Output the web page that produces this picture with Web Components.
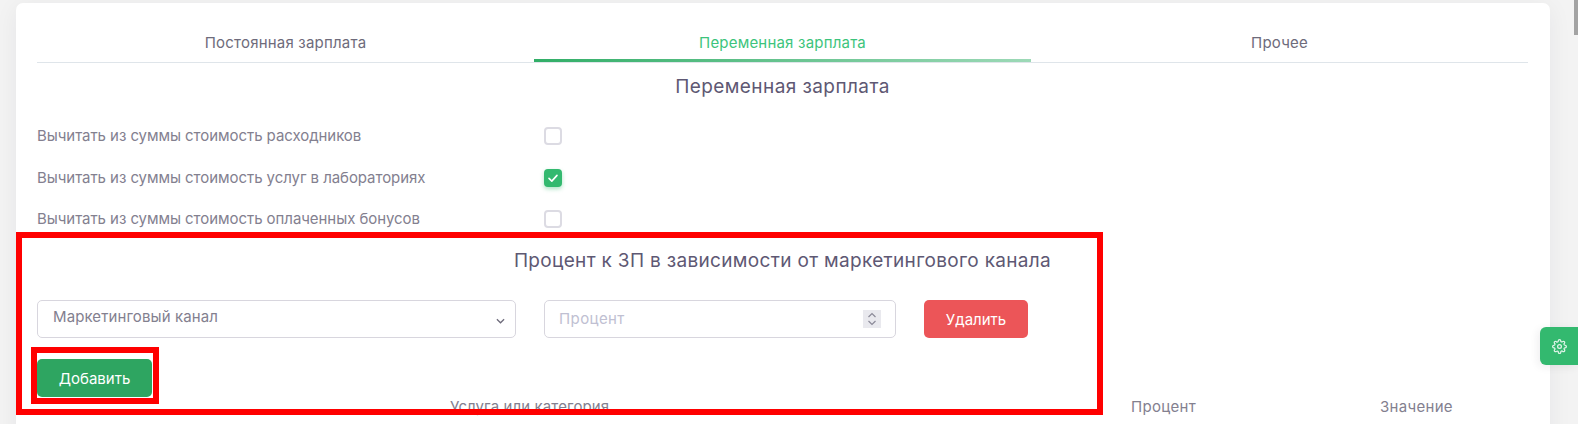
<!DOCTYPE html>
<html lang="ru">
<head>
<meta charset="utf-8">
<title>Переменная зарплата</title>
<style>
    html, body{
        margin: 0;
        height: 424px;
        overflow: hidden;
        background-color: #f3f3f3;
        font-family: "Inter", "Noto Sans", sans-serif;
    }
</style>
</head>
<body>
<salary-card>
    <salary-tabs></salary-tabs>
    <section-title style="margin-top: 12px; letter-spacing: .42px;">Переменная зарплата</section-title>
    <check-row style="margin-top: 28px;">Вычитать из суммы стоимость расходников</check-row>
    <check-row style="margin-top: 24px;" checked>Вычитать из суммы стоимость услуг в лабораториях</check-row>
    <check-row style="margin-top: 23px;">Вычитать из суммы стоимость оплаченных бонусов</check-row>
    <section-title style="margin-top: 21px; letter-spacing: .33px;">Процент к ЗП в зависимости от маркетингового канала</section-title>
    <channel-form style="margin-top: 27px;"></channel-form>
    <action-button style="margin-top: 21px;" kind="add">Добавить</action-button>
    <table-head></table-head>
</salary-card>
<red-frame style="left: 16px; top: 232px; width: 1087px; height: 183px;"></red-frame>
<red-frame style="left: 31px; top: 347px; width: 128px; height: 57px;"></red-frame>
<gear-tab></gear-tab>
<scroll-thumb></scroll-thumb>

<script>
class SalaryCard extends HTMLElement{
    constructor(){
        super();
        this.shadowDom = this.attachShadow({mode: "open"});
    }
    connectedCallback(){
        this.shadowDom.innerHTML = `
            <style>
                :host{
                    display: block;
                    margin: 3px 28px 0 16px;
                    padding: 0 22px 0 21px;
                    height: 600px;
                    background-color: #fff;
                    border-radius: 7px;
                    box-shadow: 0 4px 24px 0 rgba(34, 41, 47, 0.06);
                }
            </style>
            <slot></slot>
        `;
    }
}

class SalaryTabs extends HTMLElement{
    constructor(){
        super();
        this.shadowDom = this.attachShadow({mode: "open"});
    }
    connectedCallback(){
        this.shadowDom.innerHTML = `
            <style>
                :host{
                    display: grid;
                    grid-template-columns: repeat(3, 1fr);
                    height: 60px;
                    box-sizing: border-box;
                    border-bottom: 1px solid #dfe5ea;
                    font-size: 15px;
                    letter-spacing: .2px;
                    color: #6e6b7b;
                }
                .tab{
                    text-align: center;
                    padding-top: 31px;
                    line-height: 18px;
                }
                .active{
                    color: #3cc47c;
                    background: linear-gradient(90deg, #31ae67, #9dd9b7) bottom / 100% 3px no-repeat;
                }
            </style>
            <div class="tab">Постоянная зарплата</div>
            <div class="tab active">Переменная зарплата</div>
            <div class="tab">Прочее</div>
        `;
    }
}

class SectionTitle extends HTMLElement{
    constructor(){
        super();
        this.shadowDom = this.attachShadow({mode: "open"});
    }
    connectedCallback(){
        this.shadowDom.innerHTML = `
            <style>
                :host{
                    display: block;
                    text-align: center;
                    font-size: 19px;
                    line-height: 24px;
                    color: #5e5873;
                }
            </style>
            <slot></slot>
        `;
    }
}

class CheckRow extends HTMLElement{
    constructor(){
        super();
        this.shadowDom = this.attachShadow({mode: "open"});
    }
    connectedCallback(){
        var mark = this.hasAttribute("checked")
            ? `<svg viewBox="0 0 18 18" width="18" height="18"><path d="M5 9.4l2.8 2.7 5.2-5.7" fill="none" stroke="#fff" stroke-width="1.6" stroke-linecap="round" stroke-linejoin="round"/></svg>`
            : "";
        this.shadowDom.innerHTML = `
            <style>
                :host{
                    display: flex;
                    align-items: center;
                    height: 18px;
                    font-size: 15px;
                    letter-spacing: -.06px;
                    color: #83808f;
                }
                .label{
                    width: 507px;
                    position: relative;
                    top: -1px;
                }
                .box{
                    width: 18px;
                    height: 18px;
                    box-sizing: border-box;
                    border: 2px solid #dcdbe3;
                    border-radius: 4px;
                    background-color: #fff;
                }
                :host([checked]) .box{
                    border: none;
                    background-color: #33b96f;
                    box-shadow: 0 2px 4px 0 rgba(51, 185, 111, 0.4);
                }
                svg{
                    display: block;
                }
            </style>
            <div class="label"><slot></slot></div>
            <div class="box">${mark}</div>
        `;
    }
}

class ChannelForm extends HTMLElement{
    constructor(){
        super();
        this.shadowDom = this.attachShadow({mode: "open"});
    }
    connectedCallback(){
        this.shadowDom.innerHTML = `
            <style>
                :host{
                    display: grid;
                    grid-template-columns: 479px 352px 104px;
                    column-gap: 28px;
                    height: 38px;
                    font-size: 15px;
                }
                .field{
                    box-sizing: border-box;
                    border: 1px solid #d8d6de;
                    border-radius: 5px;
                    display: flex;
                    align-items: center;
                    justify-content: space-between;
                    background-color: #fff;
                }
                .select{
                    padding: 0 10px 0 15px;
                    color: #83808f;
                    letter-spacing: .1px;
                }
                .select span{
                    position: relative;
                    top: -3px;
                }
                .select svg{
                    position: relative;
                    top: 2px;
                }
                .input{
                    padding: 0 14px 0 14px;
                    color: #c0c0d2;
                    letter-spacing: .4px;
                }
                .input span{
                    position: relative;
                    top: -1px;
                }
                .spin{
                    width: 18px;
                    height: 18px;
                    background-color: #e9e9ee;
                    display: block;
                }
            </style>
            <div class="field select">
                <span>Маркетинговый канал</span>
                <svg viewBox="0 0 10 6" width="9" height="6"><path d="M1 1l4 4 4-4" fill="none" stroke="#6e6b7b" stroke-width="1.4"/></svg>
            </div>
            <div class="field input">
                <span>Процент</span>
                <svg class="spin" viewBox="0 0 18 18"><path d="M5.5 7l3.5-3.5 3.5 3.5M5.5 11l3.5 3.5 3.5-3.5" fill="none" stroke="#8b8a98" stroke-width="1.2"/></svg>
            </div>
            <action-button kind="delete">Удалить</action-button>
        `;
    }
}

class ActionButton extends HTMLElement{
    constructor(){
        super();
        this.shadowDom = this.attachShadow({mode: "open"});
    }
    connectedCallback(){
        this.shadowDom.innerHTML = `
            <style>
                :host{
                    display: flex;
                    align-items: center;
                    justify-content: center;
                    height: 38px;
                    border-radius: 5px;
                    font-size: 15px;
                    color: #fff;
                    cursor: pointer;
                }
                :host([kind="add"]){
                    width: 115px;
                    background-color: #2ea561;
                }
                :host([kind="delete"]){
                    width: 104px;
                    background-color: #ec5558;
                }
            </style>
            <slot></slot>
        `;
    }
}

class TableHead extends HTMLElement{
    constructor(){
        super();
        this.shadowDom = this.attachShadow({mode: "open"});
    }
    connectedCallback(){
        this.shadowDom.innerHTML = `
            <style>
                :host{
                    display: grid;
                    grid-template-columns: 1094px 249px 1fr;
                    font-size: 15px;
                    line-height: 20px;
                    color: #83808f;
                    letter-spacing: .3px;
                }
                .first{
                    padding-left: 413px;
                    letter-spacing: .1px;
                }
            </style>
            <div class="first">Услуга или категория</div>
            <div>Процент</div>
            <div>Значение</div>
        `;
    }
}

class RedFrame extends HTMLElement{
    constructor(){
        super();
        this.shadowDom = this.attachShadow({mode: "open"});
    }
    connectedCallback(){
        this.shadowDom.innerHTML = `
            <style>
                :host{
                    display: block;
                    position: absolute;
                    box-sizing: border-box;
                    border: 6px solid #f00;
                    pointer-events: none;
                }
            </style>
        `;
    }
}

class GearTab extends HTMLElement{
    constructor(){
        super();
        this.shadowDom = this.attachShadow({mode: "open"});
    }
    connectedCallback(){
        this.shadowDom.innerHTML = `
            <style>
                :host{
                    display: flex;
                    align-items: center;
                    justify-content: center;
                    position: absolute;
                    right: 0;
                    top: 327px;
                    width: 38px;
                    height: 38px;
                    background-color: #33b96f;
                    border-radius: 6px 0 0 6px;
                    box-shadow: -2px 2px 8px rgba(34, 41, 47, 0.08);
                }
            </style>
            <svg viewBox="0 0 24 24" width="15" height="15" fill="none" stroke="#fff" stroke-opacity=".85" stroke-width="2" stroke-linecap="round" stroke-linejoin="round">
                <circle cx="12" cy="12" r="3"></circle>
                <path d="M19.4 15a1.65 1.65 0 0 0 .33 1.82l.06.06a2 2 0 0 1 0 2.83 2 2 0 0 1-2.83 0l-.06-.06a1.65 1.65 0 0 0-1.82-.33 1.65 1.65 0 0 0-1 1.51V21a2 2 0 0 1-2 2 2 2 0 0 1-2-2v-.09A1.65 1.65 0 0 0 9 19.4a1.65 1.65 0 0 0-1.82.33l-.06.06a2 2 0 0 1-2.83 0 2 2 0 0 1 0-2.83l.06-.06a1.65 1.65 0 0 0 .33-1.82 1.65 1.65 0 0 0-1.51-1H3a2 2 0 0 1-2-2 2 2 0 0 1 2-2h.09A1.65 1.65 0 0 0 4.6 9a1.65 1.65 0 0 0-.33-1.82l-.06-.06a2 2 0 0 1 0-2.83 2 2 0 0 1 2.83 0l.06.06a1.65 1.65 0 0 0 1.82.33H9a1.65 1.65 0 0 0 1-1.51V3a2 2 0 0 1 2-2 2 2 0 0 1 2 2v.09a1.65 1.65 0 0 0 1 1.51 1.65 1.65 0 0 0 1.82-.33l.06-.06a2 2 0 0 1 2.83 0 2 2 0 0 1 0 2.83l-.06.06a1.65 1.65 0 0 0-.33 1.82V9a1.65 1.65 0 0 0 1.51 1H21a2 2 0 0 1 2 2 2 2 0 0 1-2 2h-.09a1.65 1.65 0 0 0-1.51 1z"></path>
            </svg>
        `;
    }
}

class ScrollThumb extends HTMLElement{
    constructor(){
        super();
        this.shadowDom = this.attachShadow({mode: "open"});
    }
    connectedCallback(){
        this.shadowDom.innerHTML = `
            <style>
                :host{
                    display: block;
                    position: absolute;
                    right: 0;
                    top: 0;
                    width: 4px;
                    height: 35px;
                    background-color: #a3a3a3;
                }
            </style>
        `;
    }
}

customElements.define("salary-card", SalaryCard);
customElements.define("salary-tabs", SalaryTabs);
customElements.define("section-title", SectionTitle);
customElements.define("check-row", CheckRow);
customElements.define("channel-form", ChannelForm);
customElements.define("action-button", ActionButton);
customElements.define("table-head", TableHead);
customElements.define("red-frame", RedFrame);
customElements.define("gear-tab", GearTab);
customElements.define("scroll-thumb", ScrollThumb);
</script>
</body>
</html>
